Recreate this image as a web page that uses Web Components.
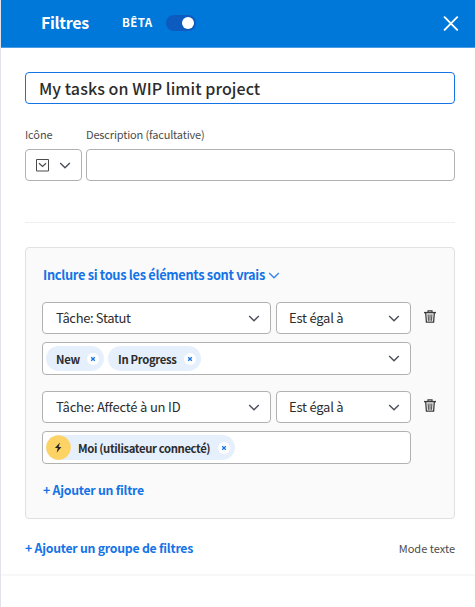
<!DOCTYPE html>
<html lang="fr"><head><meta charset="utf-8"><title>Filtres</title>
<style>
html,body{margin:0;height:100%;background:#fff}
body{font-family:"Noto Sans CJK SC","Noto Sans",sans-serif;color:#2c2c2c;overflow:hidden}
</style></head><body>
<filter-panel></filter-panel>
<script>
function define(name, html){
  const t=document.createElement('template');t.innerHTML=html;
  customElements.define(name,class extends HTMLElement{
    constructor(){super();this.attachShadow({mode:'open'}).append(t.content.cloneNode(true));}
  });
}
define('chevron-icon',`<style>:host{display:block;flex:none;width:12px;height:7px;color:#4a4f5c}svg{display:block}</style>
<svg width="12" height="7" viewBox="0 0 12 7" fill="none" stroke="currentColor" stroke-width="1.4"><path d="M1.2 1L6 5.8 10.8 1"/></svg>`);
define('trash-icon',`<style>:host{display:block;flex:none;width:12px;height:13px;color:#3c3c3c}svg{display:block}</style>
<svg width="12" height="13" viewBox="0 0 12 13" fill="none" stroke="currentColor"><path d="M0 2.6h12" stroke-width="1.4"/><path d="M4 2.4V.8h4v1.6" stroke-width="1.2"/><path d="M1.7 3l.7 9.1h7.2l.7-9.1" stroke-width="1.3"/><path d="M4.1 4.4l.3 6.4M6 4.4v6.4M7.9 4.4l-.3 6.4" stroke-width="1"/></svg>`);
define('close-icon',`<style>:host{display:block;color:#fff}svg{display:block}</style>
<svg width="16" height="16" viewBox="0 0 16 16" stroke="currentColor" stroke-width="1.9" stroke-linecap="round"><path d="M1.6 1.2l12.6 12.6M14.2 1.2L1.6 13.8"/></svg>`);
define('toggle-switch',`<style>:host{display:flex;justify-content:flex-end;align-items:center;box-sizing:border-box;width:30px;height:16px;margin-bottom:1px;padding:0 2px;border-radius:8px;background:#0d5bbf}i{width:12px;height:12px;border-radius:50%;background:#fff}</style><i></i>`);
define('panel-header',`<style>:host{display:flex;align-items:center;box-sizing:border-box;height:48px;padding:0 16px 0 40px;background:#0078d9;border-bottom:1px solid #4a9de4;color:#fff;font-weight:700;line-height:24px}
.t{font-size:16px;width:81px;margin-bottom:3px}.b{font-size:11.5px;width:44px;margin-bottom:3px}close-icon{margin-left:auto}span{white-space:nowrap}</style>
<span class="t"><slot></slot></span><span class="b"><slot name="badge"></slot></span><toggle-switch></toggle-switch><close-icon></close-icon>`);
define('field-box',`<style>:host{display:flex;align-items:center;box-sizing:border-box;height:32px;padding:0 10px 0 13px;border:1px solid #b1b1b1;border-radius:4px;background:#fff;font-size:13px;line-height:20px;white-space:nowrap}
:host([focused]){border-color:#1473e6;font-size:16px;font-weight:500}:host([chips]){height:33px;padding-left:3px;gap:4px}.end{margin-left:auto}</style><slot></slot><span class="end"><slot name="end"></slot></span>`);
define('text-label',`<style>:host{display:block;font-size:11px;line-height:18px;color:#4b4b4b;white-space:nowrap}</style><slot></slot>`);
define('action-link',`<style>:host{display:flex;align-items:center;font-size:12.3px;font-weight:700;line-height:20px;color:#1473e6;white-space:nowrap}:host([large]){font-size:12.8px}</style><slot></slot>`);
define('tag-chip',`<style>:host{display:flex;align-items:center;box-sizing:border-box;height:25px;border-radius:13px;background:#e6f0fd;padding:0 5px 0 10px;font-size:11.3px;font-weight:700;line-height:18px;white-space:nowrap}
:host([user]){padding-left:0}.x{display:block;flex:none;margin-left:auto}</style>
<slot name="icon"></slot><slot></slot><svg class="x" width="12" height="12" viewBox="0 0 12 12"><circle cx="6" cy="6" r="6" fill="#fff"/><path d="M4.2 4.2l3.6 3.6M7.8 4.2L4.2 7.8" stroke="#1473e6" stroke-width="1.3"/></svg>`);
define('user-badge',`<style>:host{display:block;margin-right:7px}svg{display:block}</style><svg width="25" height="25" viewBox="0 0 25 25"><circle cx="12.5" cy="12.5" r="12.3" fill="#fdd365"/><path d="M14 7.4L8.9 13h2.9l-1.2 4.7L15.4 12h-2.8z" fill="#242424"/></svg>`);
define('filter-row',`<style>:host{display:grid;grid-template-columns:229px 135px 12px;grid-template-rows:32px 33px;column-gap:5px;row-gap:8px}
.v{grid-column:1/3;display:grid}trash-icon{margin:8px 0 0 8px}</style><slot name="field"></slot><slot name="op"></slot><trash-icon></trash-icon><div class="v"><slot name="value"></slot></div>`);
define('filter-group',`<style>:host{display:block;box-sizing:border-box;height:272px;border:1px solid #e1e1e1;border-radius:4px;background:#fafafa;padding:17px 16px 0}
.rows{display:grid;row-gap:16px;margin:17px 0 16px}</style><slot name="head"></slot><div class="rows"><slot></slot></div><slot name="foot"></slot>`);
define('filter-panel',`<style>
:host{display:block;box-sizing:border-box;height:607px;border-left:1px solid #e2e2ea;background:#fff}
main{display:block;padding:24px 20px 0 24px}
.meta{display:grid;grid-template-columns:57px 1fr;column-gap:4px;row-gap:6px;margin-top:21px}
hr{border:0;border-top:1px solid #eee;margin:41px 0 24px}
.bottom{display:flex;justify-content:space-between;align-items:center;height:20px;margin-top:19px}
.end{border-top:2px solid #f8f8f8;margin-top:16px}
.i{display:block}.s{margin-left:10px}.link{color:#3b86e8;margin-left:3px}
span{white-space:nowrap}
field-box>span{padding-bottom:1px}
tag-chip>span{padding-top:1px}
.in{padding-left:1px}
</style>
<panel-header><span style="letter-spacing:-.3px">Filtres</span><span slot="badge" style="letter-spacing:.4px">BÊTA</span></panel-header>
<main>
<field-box focused><span style="letter-spacing:.08px">My tasks on WIP limit project</span></field-box>
<div class="meta"><text-label><span style="letter-spacing:-.1px">Icône</span></text-label><text-label><span style="letter-spacing:-.16px">Description (facultative)</span></text-label>
<field-box style="padding:0 10px"><svg class="i" width="13" height="13" viewBox="0 0 13 13" fill="none" stroke="#4b4b4b"><path d="M.5.5h12v11.5H.5z"/><path d="M3 4.3l3.5 3.2L10 4.3" stroke-width="1.2"/></svg><chevron-icon class="s"></chevron-icon></field-box><field-box></field-box></div>
<hr>
<filter-group>
<action-link slot="head" large><span class="in" style="letter-spacing:-.31px">Inclure si tous les éléments sont vrais</span><chevron-icon class="link"></chevron-icon></action-link>
<filter-row><field-box slot="field"><span style="letter-spacing:-.35px">Tâche: Statut</span><chevron-icon slot="end"></chevron-icon></field-box><field-box slot="op" style="padding-left:12px"><span style="letter-spacing:-.22px">Est égal à</span><chevron-icon slot="end"></chevron-icon></field-box>
<field-box slot="value" chips><tag-chip style="width:58px"><span style="letter-spacing:-.2px">New</span></tag-chip><tag-chip style="width:93px"><span style="letter-spacing:-.33px">In Progress</span></tag-chip><chevron-icon slot="end"></chevron-icon></field-box></filter-row>
<filter-row><field-box slot="field"><span style="letter-spacing:-.19px">Tâche: Affecté à un ID</span><chevron-icon slot="end"></chevron-icon></field-box><field-box slot="op" style="padding-left:12px"><span style="letter-spacing:-.22px">Est égal à</span><chevron-icon slot="end"></chevron-icon></field-box>
<field-box slot="value" chips><tag-chip user style="width:189px"><user-badge slot="icon"></user-badge><span style="letter-spacing:-.38px">Moi (utilisateur connecté)</span></tag-chip></field-box></filter-row>
<action-link slot="foot"><span class="in" style="letter-spacing:-.25px">+ Ajouter un filtre</span></action-link>
</filter-group>
<div class="bottom"><action-link><span style="letter-spacing:-.25px">+ Ajouter un groupe de filtres</span></action-link><text-label><span>Mode texte</span></text-label></div>
</main><div class="end"></div>`);
</script></body></html>
